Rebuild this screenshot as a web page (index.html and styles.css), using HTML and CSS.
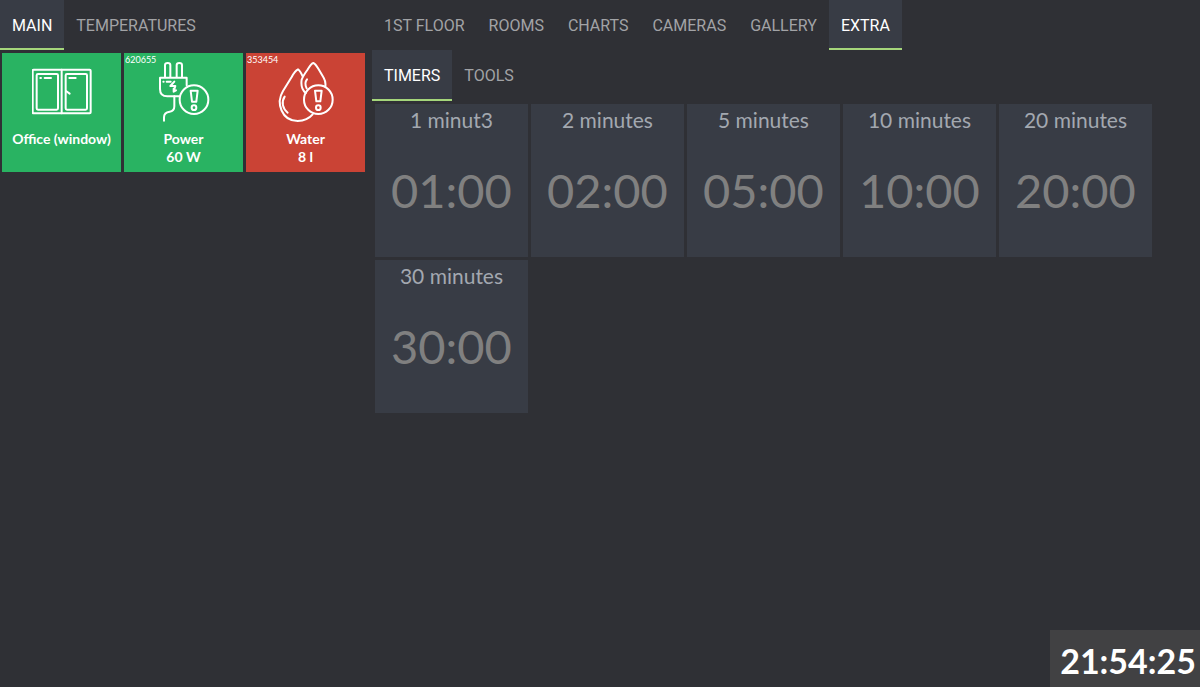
FILE: index.html
```html
<!DOCTYPE html>
<html lang="en">
<head>
<meta charset="utf-8">
<title>Home dashboard</title>
<link rel="stylesheet" href="styles.css">
</head>
<body>
<main class="dashboard">
  <section class="side">
    <nav class="tabs">
      <a class="tab active" href="#main">MAIN</a>
      <a class="tab" href="#temperatures">TEMPERATURES</a>
    </nav>
    <div class="devices">
      <button class="device" type="button">
        <svg class="icon" viewBox="96 35 180 180" aria-hidden="true">
          <rect x="98" y="58" width="174" height="131" rx="3"/>
          <path d="M185 58V189"/>
          <rect x="110" y="71" width="64" height="107" rx="4"/>
          <rect x="197" y="71" width="64" height="107" rx="4"/>
          <path d="M121 83h2M134 83h19M208 83h19M198 122l11 8"/>
        </svg>
        <span class="label">Office (window)</span>
      </button>
      <button class="device" type="button">
        <span class="badge">620655</span>
        <svg class="icon" viewBox="96 35 180 180" aria-hidden="true">
          <path d="M129 80V44q0-6 8-6t8 6V80M164 80V44q0-6 8-6t8 6V80"/>
          <path d="M172 138H136Q114 138 114 116V82H194V105"/>
          <path d="M157 138V168Q157 183 143 184Q126 186 126 201V211"/>
          <path d="M124 94h1M134 94h12M157 94L145 107H160L155 123M155 115V124L162 120"/>
          <circle cx="216" cy="148" r="43"/>
          <path d="M206 121H227L223 154H210Z"/>
          <circle cx="216" cy="172" r="7"/>
        </svg>
        <span class="label">Power</span>
        <span class="label">60 W</span>
      </button>
      <button class="device alert" type="button">
        <span class="badge">353454</span>
        <svg class="icon" viewBox="96 35 180 180" aria-hidden="true">
          <path d="M176 78Q168 60 162 57Q153 61 143 80L117 122C95 158 113 212 161 212Q190 211 206 192"/>
          <path d="M185 128Q169 114 173 88Q177 77 190 59Q202 39 208 38Q214 40 224 57L239 82Q246 94 244 108"/>
          <path d="M189 87Q180 98 188 114M122 139C111 155 116 175 131 187"/>
          <circle cx="223" cy="148" r="43"/>
          <path d="M213 121H233L229 153H217Z"/>
          <circle cx="223" cy="172" r="7"/>
        </svg>
        <span class="label">Water</span>
        <span class="label">8 l</span>
      </button>
    </div>
  </section>
  <section class="content">
    <nav class="tabs">
      <a class="tab" href="#floor">1ST FLOOR</a>
      <a class="tab" href="#rooms">ROOMS</a>
      <a class="tab" href="#charts">CHARTS</a>
      <a class="tab" href="#cameras">CAMERAS</a>
      <a class="tab" href="#gallery">GALLERY</a>
      <a class="tab active" href="#extra">EXTRA</a>
    </nav>
    <nav class="tabs subtabs">
      <a class="tab active" href="#timers">TIMERS</a>
      <a class="tab" href="#tools">TOOLS</a>
    </nav>
    <div class="timers">
      <button class="timer" type="button"><span class="name">1 minut3</span><span class="time">01:00</span></button>
      <button class="timer" type="button"><span class="name">2 minutes</span><span class="time">02:00</span></button>
      <button class="timer" type="button"><span class="name">5 minutes</span><span class="time">05:00</span></button>
      <button class="timer" type="button"><span class="name">10 minutes</span><span class="time">10:00</span></button>
      <button class="timer" type="button"><span class="name">20 minutes</span><span class="time">20:00</span></button>
      <button class="timer" type="button"><span class="name">30 minutes</span><span class="time">30:00</span></button>
    </div>
  </section>
</main>
<time class="clock">21:54:25</time>
</body>
</html>
```

FILE: styles.css
```css
* {
  box-sizing: border-box;
}

body {
  margin: 0;
  min-height: 100vh;
  background: #2f3035;
  color: #fff;
  font-family: Lato, sans-serif;
}

.dashboard {
  display: grid;
  grid-template-columns: 31% 1fr;
}

.tabs {
  display: flex;
}

.tab {
  height: 50px;
  padding: 0 12px;
  border-bottom: 2px solid transparent;
  color: #a2a3a6;
  font: 16px/52px Roboto, sans-serif;
  text-decoration: none;
}

.subtabs .tab {
  height: 51px;
}

.tab.active {
  background: #383c45;
  border-bottom-color: #a5d67b;
  color: #fff;
}

.devices {
  display: grid;
  grid-template-columns: repeat(3, 1fr);
  gap: 3px;
  padding: 3px 7px 0 2px;
}

.device {
  position: relative;
  display: flex;
  flex-direction: column;
  align-items: center;
  aspect-ratio: 1;
  padding: 9px 0 0;
  border: 0;
  background: #29b362;
  color: #fff;
  font: bold 14px/18px Lato, sans-serif;
}

.device.alert {
  background: #ca4335;
}

.icon {
  width: 60px;
  height: 60px;
  margin-bottom: 8px;
  fill: none;
  stroke: #fff;
  stroke-width: 6;
  stroke-linecap: round;
  stroke-linejoin: round;
}

.badge {
  position: absolute;
  top: 1px;
  left: 1px;
  font: 9px/11px Lato, sans-serif;
}

.timers {
  display: flex;
  flex-wrap: wrap;
  gap: 3px;
  padding: 3px;
}

.timer {
  display: flex;
  flex-direction: column;
  align-items: center;
  width: 153px;
  height: 153px;
  padding: 0;
  border: 0;
  background: #383c45;
  font-family: Lato, sans-serif;
}

.name {
  color: #a3a8b0;
  font-size: 21px;
  line-height: 32px;
}

.time {
  margin-top: 24px;
  color: #808080;
  font-size: 47px;
  line-height: 60px;
}

.clock {
  position: fixed;
  right: 0;
  bottom: 0;
  padding: 8px 4px 4px 10px;
  background: #414143;
  font-size: 34px;
  font-weight: bold;
  line-height: 45px;
}
```
